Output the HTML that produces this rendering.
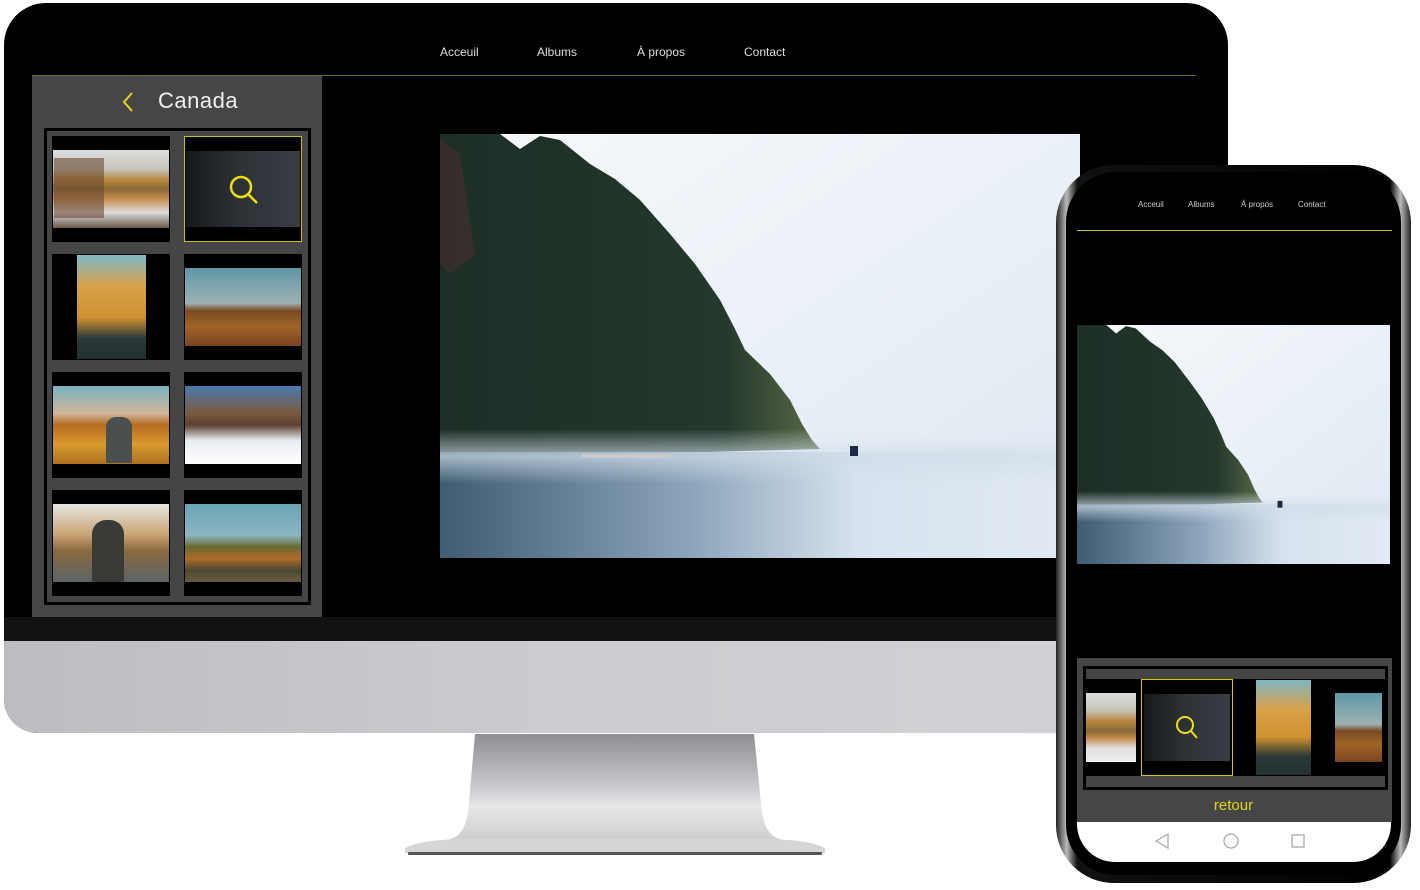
<!DOCTYPE html>
<html><head><meta charset="utf-8">
<style>
*{margin:0;padding:0;box-sizing:border-box}
body{width:1420px;height:890px;background:#fff;position:relative;overflow:hidden;font-family:"Liberation Sans",sans-serif}
.a{position:absolute}
.nav{color:#ddd;font-size:12px}
.cell{position:absolute;background:#000;width:118px;height:106px}
.ph{position:absolute;left:1px;right:1px;top:14px;bottom:14px}
</style></head><body>
<!-- monitor -->
<div class="a" style="left:4px;top:3px;width:1224px;height:730px;border-radius:42px 42px 34px 34px;background:#000;overflow:hidden">
  <div class="a" style="left:0;top:614px;width:100%;height:24px;background:#111"></div>
  <div class="a" style="left:0;top:638px;width:100%;height:92px;background:linear-gradient(90deg,#bcbdc0,#cacbce 40%,#d2d3d6)"></div>
</div>
<!-- stand -->
<svg class="a" style="left:400px;top:733px" width="430" height="130">
<defs><linearGradient id="st" x1="0" y1="0" x2="0" y2="1"><stop offset="0" stop-color="#8e8f93"/><stop offset=".45" stop-color="#c5c6c9"/><stop offset=".65" stop-color="#e6e7e9"/><stop offset="1" stop-color="#c9cacc"/></linearGradient></defs>
<path d="M75,1 L354,1 L362,80 Q366,103 380,106 L380,112 L50,112 L50,106 Q64,103 68,80 Z" fill="url(#st)"/>
<path d="M5,115 Q20,107 60,106 L370,106 Q410,107 425,115 L425,120 L5,120 Z" fill="#d5d6d8"/>
<rect x="8" y="119" width="414" height="3" fill="#555" rx="1"/>
</svg>
<!-- screen content -->
<div class="a nav" style="left:440px;top:45px">Acceuil</div>
<div class="a nav" style="left:537px;top:45px">Albums</div>
<div class="a nav" style="left:637px;top:45px">À propos</div>
<div class="a nav" style="left:744px;top:45px">Contact</div>
<div class="a" style="left:32px;top:75px;width:1164px;height:1px;background:#6b6a1e"></div>
<div class="a" style="left:32px;top:76px;width:290px;height:541px;background:#464646"></div>
<svg class="a" style="left:120px;top:91px" width="16" height="22"><path d="M12,2 L4,11 L12,20" stroke="#e6d21a" stroke-width="2" fill="none"/></svg>
<div class="a" style="left:158px;top:88px;color:#f0f0f0;font-size:22px;letter-spacing:.5px">Canada</div>
<div class="a" style="left:44px;top:128px;width:267px;height:477px;border:3px solid #000;background:#454545"></div>

<div class="cell" style="left:52px;top:136px"><div class="ph" style="background:linear-gradient(#dcdfe0 0%,#c6c3b8 25%,#b9873f 38%,#8a6a3a 50%,#c48a4a 62%,#dcdcdc 80%,#6a5a4a 100%)"></div><div class="a" style="left:2px;top:22px;width:50px;height:60px;background:#6a4a32;opacity:.6"></div></div>
<div class="cell" style="left:184px;top:136px;border:1px solid #c8c000"><div class="ph" style="background:linear-gradient(90deg,#15191c,#2c3136 45%,#3a3e44)"></div>
<svg class="a" style="left:42px;top:36px" width="36" height="32"><circle cx="14" cy="14" r="10" stroke="#f1de10" stroke-width="2.5" fill="none"/><path d="M21,21 L30,30" stroke="#f1de10" stroke-width="2.5"/></svg></div>
<div class="cell" style="left:52px;top:254px"><div class="a" style="left:25px;top:1px;width:69px;height:104px;background:linear-gradient(#7fb8c8,#d8a24a 30%,#d09030 60%,#2a3a38 80%,#23302f)"></div></div>
<div class="cell" style="left:184px;top:254px"><div class="ph" style="background:linear-gradient(#5d97a6,#9fb2b3 45%,#7a4a20 55%,#a06428 75%,#7a4520)"></div></div>
<div class="cell" style="left:52px;top:372px"><div class="ph" style="background:linear-gradient(#7ab0bf,#d0b69a 35%,#b86b20 50%,#d89a30 75%,#b07020)"></div><div class="a" style="left:54px;top:45px;width:26px;height:46px;background:#4a4f50;border-radius:10px 10px 0 0"></div></div>
<div class="cell" style="left:184px;top:372px"><div class="ph" style="background:linear-gradient(#4a7ab0,#7a5a40 35%,#5a4030 50%,#e8ecf2 70%,#ffffff)"></div></div>
<div class="cell" style="left:52px;top:490px"><div class="ph" style="background:linear-gradient(#e6e6e2,#c8a270 40%,#8a6a40 60%,#5a6468 100%)"></div><div class="a" style="left:40px;top:30px;width:32px;height:62px;background:#3a3a36;border-radius:14px 14px 0 0"></div></div>
<div class="cell" style="left:184px;top:490px"><div class="ph" style="background:linear-gradient(#6aa4b6,#8ab6c0 40%,#6a6a30 55%,#b06a28 70%,#4a4a30 85%,#6a5a40)"></div></div>

<!-- main photo -->
<svg class="a" style="left:440px;top:134px" width="640" height="424" viewBox="0 0 640 424" preserveAspectRatio="none">
<defs>
<linearGradient id="sky" x1="0" y1="0" x2="1" y2="1"><stop offset="0" stop-color="#f6f9fc"/><stop offset="1" stop-color="#dfe8f2"/></linearGradient>
<linearGradient id="wat" x1="0" y1="0" x2="1" y2="0"><stop offset="0" stop-color="#3e5c72"/><stop offset=".4" stop-color="#8ea6bc"/><stop offset=".65" stop-color="#d6e2ee"/><stop offset="1" stop-color="#e2eaf4"/></linearGradient>
<linearGradient id="tr" x1="0" y1="0" x2="1" y2="0"><stop offset="0" stop-color="#1d2e26"/><stop offset=".75" stop-color="#24382c"/><stop offset="1" stop-color="#5a6a48"/></linearGradient>
<linearGradient id="mist" x1="0" y1="0" x2="0" y2="1"><stop offset="0" stop-color="#e0e8f0" stop-opacity="0"/><stop offset=".5" stop-color="#d0dce8" stop-opacity=".7"/><stop offset="1" stop-color="#d0dce8" stop-opacity="0"/></linearGradient>
</defs>
<rect width="640" height="424" fill="url(#sky)"/>
<path d="M0,0 L60,0 L80,15 L100,2 L120,6 L150,30 L175,45 L200,66 L230,100 L255,130 L280,166 L295,195 L305,216 L330,240 L350,266 L362,290 L372,306 L380,315 L0,325 Z" fill="url(#tr)"/>
<path d="M0,5 L20,20 L35,120 L10,140 L0,130 Z" fill="#5a3038" opacity=".4"/>
<rect x="0" y="318" width="640" height="106" fill="url(#wat)"/>
<rect x="0" y="295" width="640" height="55" fill="url(#mist)"/>
<rect x="142" y="320" width="88" height="4" fill="#c8cacc"/>
<rect x="410" y="312" width="8" height="10" fill="#1d2a44"/>
</svg>

<!-- phone -->
<div class="a" style="left:1056px;top:165px;width:355px;height:718px;border-radius:58px;background:linear-gradient(90deg,#222,#bbb 3%,#111 6%,#000 94%,#bbb 97%,#222);"></div>
<div class="a" style="left:1066px;top:172px;width:335px;height:703px;border-radius:50px;background:#000"></div>
<div class="a" style="left:1077px;top:180px;width:314px;height:682px;border-radius:38px;background:#000;overflow:hidden">
  <div class="a" style="left:0;top:642px;width:100%;height:40px;background:#fff"></div>
</div>
<div class="a" style="left:1138px;top:200px;color:#ccc;font-size:8px">Acceuil</div>
<div class="a" style="left:1188px;top:200px;color:#ccc;font-size:8px">Albums</div>
<div class="a" style="left:1241px;top:200px;color:#ccc;font-size:8px">À propos</div>
<div class="a" style="left:1298px;top:200px;color:#ccc;font-size:8px">Contact</div>
<div class="a" style="left:1077px;top:230px;width:315px;height:1px;background:#c8c020"></div>
<svg class="a" style="left:1077px;top:325px" width="313" height="239" viewBox="0 0 640 424" preserveAspectRatio="none">
<rect width="640" height="424" fill="url(#sky)"/>
<path d="M0,0 L60,0 L80,15 L100,2 L120,6 L150,30 L175,45 L200,66 L230,100 L255,130 L280,166 L295,195 L305,216 L330,240 L350,266 L362,290 L372,306 L380,315 L0,325 Z" fill="url(#tr)"/>
<rect x="0" y="318" width="640" height="106" fill="url(#wat)"/>
<rect x="0" y="295" width="640" height="55" fill="url(#mist)"/>
<rect x="410" y="312" width="10" height="12" fill="#1d2a44"/>
</svg>
<div class="a" style="left:1077px;top:658px;width:315px;height:164px;background:#464646"></div>
<div class="a" style="left:1083px;top:666px;width:305px;height:124px;background:#454545;border:3px solid #000"></div>
<div class="a" style="left:1086px;top:679px;width:299px;height:97px;background:#000"></div>
<div class="a" style="left:1086px;top:693px;width:50px;height:69px;background:linear-gradient(#dcdfe0,#c8c3b8 25%,#b9873f 40%,#8a6a3a 55%,#c48a4a 65%,#e0e0e0 80%,#eee)"></div>
<div class="a" style="left:1141px;top:679px;width:92px;height:97px;border:1px solid #d8c800;background:#000"><div class="a" style="left:2px;top:14px;width:86px;height:67px;background:linear-gradient(90deg,#15191c,#2c3136 45%,#3a3e44)"></div>
<svg class="a" style="left:32px;top:34px" width="28" height="28"><circle cx="11" cy="11" r="8" stroke="#f1de10" stroke-width="2" fill="none"/><path d="M17,17 L23,24" stroke="#f1de10" stroke-width="2"/></svg></div>
<div class="a" style="left:1256px;top:680px;width:55px;height:95px;background:linear-gradient(#7fb8c8,#d8a24a 30%,#d09030 60%,#2a3a38 80%,#23302f)"></div>
<div class="a" style="left:1335px;top:693px;width:47px;height:69px;background:linear-gradient(#5d97a6,#9fb2b3 45%,#7a4a20 55%,#a06428 75%,#7a4520)"></div>
<div class="a" style="left:1077px;top:797px;width:313px;text-align:center;color:#e6d21a;font-size:15px">retour</div>
<svg class="a" style="left:1150px;top:830px" width="160" height="22"><path d="M6,11 L18,4 L18,18 Z" stroke="#aaa" stroke-width="1.3" fill="none"/><circle cx="81" cy="11" r="7" stroke="#aaa" stroke-width="1.3" fill="none"/><rect x="142" y="5" width="12" height="12" stroke="#aaa" stroke-width="1.3" fill="none"/></svg>
</body></html>
